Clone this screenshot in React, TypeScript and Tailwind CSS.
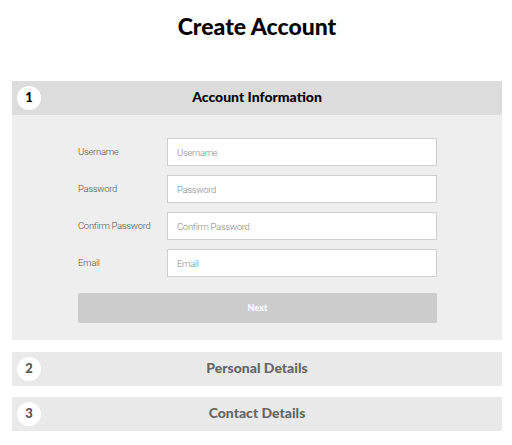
import * as React from 'react'

interface StepHeaderProps {
  step: number
  title: string
  active?: boolean
}

function StepHeader({ step, title, active }: StepHeaderProps) {
  return (
    <div
      className={`relative flex h-[34px] items-center justify-center ${
        active ? 'bg-[#dcdcdc] text-black' : 'bg-[#e9e9e9] text-[#666]'
      }`}
    >
      <span
        className={`absolute left-[5px] top-[5px] flex h-6 w-6 items-center justify-center rounded-full bg-white text-[13px] font-black ${
          active ? 'text-black' : 'text-[#555]'
        }`}
      >
        {step}
      </span>
      <span className="-translate-y-[1px] text-[14px] leading-none font-black">{title}</span>
    </div>
  )
}

const fields = [
  { label: 'Username', type: 'text' },
  { label: 'Password', type: 'password' },
  { label: 'Confirm Password', type: 'password' },
  { label: 'Email', type: 'email' },
]

export default function App() {
  return (
    <div className="min-h-[445px] bg-white pl-3 pr-[10px] pt-[12px] font-['Lato',sans-serif]">
      <h1 className="text-center text-[23px] leading-[28px] font-black text-black">Create Account</h1>

      <div className="mt-[41px] flex flex-col">
        <StepHeader step={1} title="Account Information" active />

        {/* Step body */}
        <div className="bg-[#eeeeee] pt-[23px] pb-[17px] pl-[66px] pr-[65px]">
          <div className="flex flex-col gap-[9px]">
            {fields.map((f) => (
              <div key={f.label} className="flex items-center">
                <label className="w-[89px] font-['Roboto',sans-serif] text-[9.5px] tracking-[-0.3px] font-light text-[#555]">
                  {f.label}
                </label>
                <input
                  type={f.type}
                  placeholder={f.label}
                  className="h-[28px] flex-1 border border-[#cfcfcf] bg-white px-[9px] font-['Roboto',sans-serif] text-[9.5px] tracking-[-0.3px] font-light placeholder:text-[#888] outline-none"
                />
              </div>
            ))}
          </div>

          <button className="mt-[16px] h-[30px] w-full rounded-[2px] bg-[#cccccc] text-[9px] font-black text-white">
            Next
          </button>
        </div>

        <div className="mt-[12px]">
          <StepHeader step={2} title="Personal Details" />
        </div>
        <div className="mt-[11px]">
          <StepHeader step={3} title="Contact Details" />
        </div>
      </div>
    </div>
  )
}
